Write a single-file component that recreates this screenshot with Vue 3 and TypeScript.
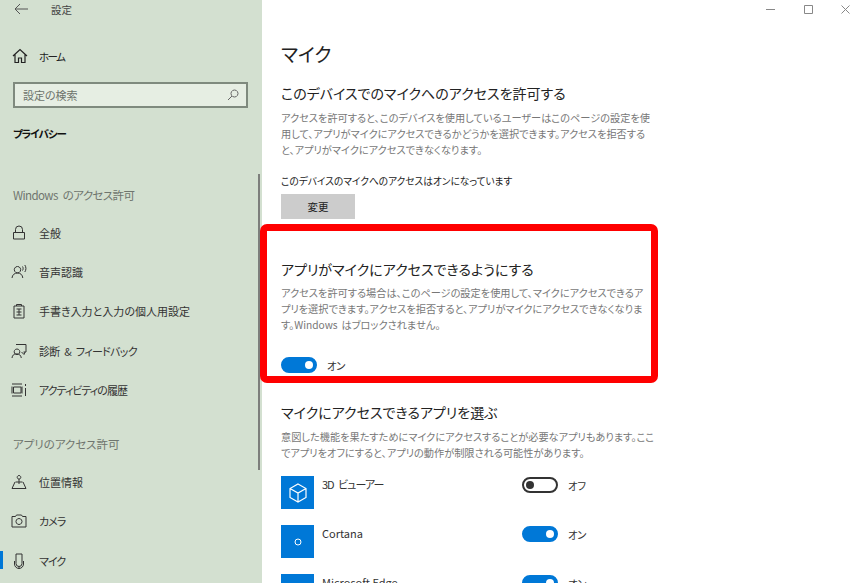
<script setup lang="ts">
interface NavItem { label: string; icon: string; active?: boolean; fit?: string }
const group1: NavItem[] = [
  { label: '全般', icon: 'lock' },
  { label: '音声認識', icon: 'speech' },
  { label: '手書き入力と入力の個人用設定', icon: 'clip' },
  { label: '診断 & フィードバック', icon: 'diag', fit: 'snug' },
  { label: 'アクティビティの履歴', icon: 'hist', fit: 'tight' },
]
const group2: NavItem[] = [
  { label: '位置情報', icon: 'loc' },
  { label: 'カメラ', icon: 'cam', fit: 'tight' },
  { label: 'マイク', icon: 'mic', active: true, fit: 'tight' },
]
const apps = [
  { name: '3D ビューアー', on: false, icon: 'cube', fit: 'tight' },
  { name: 'Cortana', on: true, icon: 'ring', fit: '' },
  { name: 'Microsoft Edge', on: true, icon: 'none', fit: '' },
]
const icons: Record<string, string> = {
  lock: 'M4.500 7.500V4.500a3.500 3.500 0 0 1 7 0v3M2.500 7.500h11v6.500h-11z',
  speech: 'M6.500 2.500a3.200 3.200 0 1 1-.01 0M1 14c.3-3.200 2.500-5 5.500-5s5 1.800 5.300 5M11.500 2.500c.8 1 .8 3 0 4M13.800 1c1.500 2 1.500 5 0 7',
  clip: 'M3 3h10v12H3zM5.500 3V1.500h5V3M5.500 6h5M5.500 9h5M5.500 12h5M8 6v6',
  diag: 'M5 1.500h10v7.500h-2.500M6 6a2.800 2.800 0 1 1-.01 0M1 15c.3-2.800 2-4.200 4.500-4.200S10 12.200 10.300 15M10.500 9l2.500 2.500 1-2.500',
  hist: 'M1 2h10M1 14h10M2.500 5h7.500v6H2.500zM1 4.500v7M11 4.500v7M14.500 2v2M14.500 6v8',
  loc: 'M8 1.500a1.800 1.800 0 1 1-.01 0M8 5v5M4.500 8h7M4 8l-3 6.500h14L12 8',
  cam: 'M1 3.500h3.500L5.500 2h5l1 1.500H15V14H1zM8 5.500a3 3 0 1 1-.01 0',
  mic: 'M5 1h6v9.500a3 3 0 0 1-6 0zM3.500 8v3a4.500 4.500 0 0 0 9 0V8M8 13v3',
}
</script>

<template>
  <div class="window">
    <aside class="sidebar">
      <div class="topbar">
        <svg class="back" width="14" height="12" viewBox="0 0 14 12"><path d="M6 1 1 6l5 5M1 6h13" fill="none" stroke="#555" /></svg>
        <span class="app-title">設定</span>
      </div>
      <div class="home">
        <svg width="16" height="16" viewBox="0 0 16 16"><path d="M1 8 8 1.500 15 8M3 6.500V14.500h3.500V10h3v4.500H13V6.500" fill="none" stroke="#222" stroke-width="1.200" /></svg>
        <span>ホーム</span>
      </div>
      <div class="search">
        <span>設定の検索</span>
        <svg width="12" height="12" viewBox="0 0 12 12"><path d="M7.500 1a3.500 3.500 0 1 1-.01 0M5 7 1 11" fill="none" stroke="#666" /></svg>
      </div>
      <div class="section-current">プライバシー</div>
      <div class="group-title first">Windows のアクセス許可</div>
      <div v-for="item in group1" :key="item.label" class="nav">
        <svg width="16" height="16" viewBox="0 0 16 16"><path :d="icons[item.icon]" fill="none" stroke="#333" /></svg>
        <span :class="item.fit">{{ item.label }}</span>
      </div>
      <div class="group-title second">アプリのアクセス許可</div>
      <div v-for="item in group2" :key="item.label" class="nav">
        <i v-if="item.active" class="active-bar"></i>
        <svg width="16" height="16" viewBox="0 0 16 16"><path :d="icons[item.icon]" fill="none" stroke="#333" /></svg>
        <span :class="item.fit">{{ item.label }}</span>
      </div>
      <i class="scrollbar"></i>
    </aside>
    <main class="content">
      <div class="winctl">
        <svg width="9" height="9" viewBox="0 0 9 9"><path d="M0 4.500h9" stroke="#888" /></svg>
        <svg width="9" height="9" viewBox="0 0 9 9"><path d="M.5.500h8v8h-8z" fill="none" stroke="#888" /></svg>
        <svg width="9" height="9" viewBox="0 0 9 9"><path d="m.5.500 8 8M8.500.500l-8 8" stroke="#888" /></svg>
      </div>
      <h1>マイク</h1>
      <h2 class="h-a">このデバイスでのマイクへのアクセスを許可する</h2>
      <p class="body">アクセスを許可すると、このデバイスを使用しているユーザーはこのページの設定を使<br />用して、アプリがマイクにアクセスできるかどうかを選択できます。アクセスを拒否する<br />と、アプリがマイクにアクセスできなくなります。</p>
      <p class="status">このデバイスのマイクへのアクセスはオンになっています</p>
      <button class="change">変更</button>
      <h2 class="h-b">アプリがマイクにアクセスできるようにする</h2>
      <p class="body b2">アクセスを許可する場合は、このページの設定を使用して、マイクにアクセスできるア<br />プリを選択できます。アクセスを拒否すると、アプリがマイクにアクセスできなくなりま<br />す。Windows はブロックされません。</p>
      <div class="toggle-row main-toggle"><span class="toggle on"></span><span class="tlabel">オン</span></div>
      <h2 class="h-c">マイクにアクセスできるアプリを選ぶ</h2>
      <p class="body">意図した機能を果たすためにマイクにアクセスすることが必要なアプリもあります。ここ<br />でアプリをオフにすると、アプリの動作が制限される可能性があります。</p>
      <div class="apps">
        <div v-for="app in apps" :key="app.name" class="app">
          <div class="tile">
            <svg v-if="app.icon === 'cube'" width="18" height="20" viewBox="0 0 18 20"><path d="M9 1 17 5.500v9L9 19l-8-4.500v-9zM1 5.500 9 10l8-4.500M9 10v9" fill="none" stroke="#fff" stroke-width="1.200" /></svg>
            <svg v-else-if="app.icon === 'ring'" width="8" height="8" viewBox="0 0 8 8"><circle cx="4" cy="4" r="3" fill="none" stroke="#fff" /></svg>
          </div>
          <span class="app-name"><span :class="app.fit">{{ app.name }}</span></span>
          <div class="toggle-row"><span class="toggle" :class="{ on: app.on }"></span><span class="tlabel">{{ app.on ? 'オン' : 'オフ' }}</span></div>
        </div>
      </div>
      <div class="highlight"></div>
    </main>
  </div>
</template>

<style>
html, body { margin: 0; overflow: hidden; }
</style>

<style scoped>
.window {
  width: 862px; height: 583px; display: flex; overflow: hidden; position: relative;
  font-family: "Noto Sans CJK JP", "Noto Sans", sans-serif; font-feature-settings: "palt"; color: #222; background: #fff;
}
.sidebar { width: 262px; flex: none; background: #d3e0d0; position: relative; padding-left: 13px; box-sizing: border-box; }
.topbar { height: 18px; display: flex; align-items: center; font-size: 10.500px; color: #444; }
.back { margin-left: 1px; }
.app-title { margin-left: 23px; }
.home { display: flex; align-items: center; height: 20px; margin-top: 28px; margin-left: -1px; font-size: 10.500px; letter-spacing: -1.500px; gap: 11px; }
.search {
  width: 235px; height: 26px; margin-top: 16px; box-sizing: border-box; border: 2px solid #7f8a7e; background: #e6eee3;
  display: flex; align-items: center; justify-content: space-between; padding: 0 7px 0 8px; font-size: 11px; color: #6d736c;
}
.section-current { margin-top: 17px; font-size: 10.500px; letter-spacing: -1px; font-weight: 700; color: #111; height: 17px; line-height: 17px; }
.group-title { font-size: 11.500px; color: #6f756e; height: 17px; line-height: 17px; }
.group-title.first { margin-top: 45px; margin-bottom: 9px; letter-spacing: -.6px; word-spacing: 3px; }
.group-title.second { margin-top: 27px; margin-bottom: 9px; }
.nav { height: 39.300px; display: flex; align-items: center; gap: 12px; font-size: 11px; position: relative; color: #333; }
.nav svg { margin-left: -2px; flex: none; }
.tight { letter-spacing: -1px; word-spacing: 3px; }
.snug { letter-spacing: -.7px; word-spacing: 3px; }
.active-bar { position: absolute; left: -13px; top: 10px; width: 3px; height: 18px; background: #0078d7; }
.scrollbar { position: absolute; right: 2px; top: 174px; width: 2px; height: 296px; background: #7d7f7c; }

.content { flex: 1; position: relative; padding-left: 19px; box-sizing: border-box; min-width: 0; }
.winctl { position: absolute; top: 5px; right: 12px; display: flex; gap: 28.500px; }
h1 { margin: 40px 0 0; font-size: 19px; font-weight: 400; line-height: 27px; color: #222; }
h2 { margin: 0; font-size: 14px; font-weight: 400; line-height: 22px; color: #222; }
.h-a { margin-top: 15px; }
.h-b { margin-top: 39px; }
.h-c { margin-top: 27px; }
.body { margin: 6px 0 0; font-size: 10.200px; line-height: 16px; color: #777; white-space: nowrap; word-spacing: 1.500px; }
.body.b2 { margin-top: 5px; }
.status { margin: 15px 0 0; font-size: 9.700px; line-height: 16px; color: #222; }
.change { display: block; margin-top: 5px; width: 74px; height: 25px; border: none; background: #ccc; font: inherit; font-size: 10.500px; color: #222; padding: 0; }
.toggle-row { display: flex; align-items: center; gap: 10px; }
.main-toggle { margin-top: 23px; height: 18px; }
.toggle { width: 36px; height: 16px; border-radius: 9px; box-sizing: border-box; border: 2px solid #333; position: relative; display: block; background: #fff; flex: none; }
.toggle::after { content: ""; position: absolute; width: 8px; height: 8px; border-radius: 50%; left: 2px; top: 2px; background: #333; }
.toggle.on { background: #0078d7; border-color: #0078d7; }
.toggle.on::after { left: auto; right: 2px; background: #fff; }
.tlabel { font-size: 10.500px; letter-spacing: -.5px; color: #333; }
.apps { margin-top: 15px; }
.app { display: flex; align-items: flex-start; height: 49px; position: relative; }
.tile { width: 33px; height: 33px; background: #0078d7; display: flex; align-items: center; justify-content: center; flex: none; }
.app-name { font-size: 11px; line-height: 16px; margin-left: 8px; width: 200px; color: #333; flex: none; }
.app .toggle-row { height: 16px; margin-top: 1px; }
.highlight { position: absolute; left: -2px; top: 224px; width: 398px; height: 159px; box-sizing: border-box; border: 7px solid #f00; border-radius: 7px; pointer-events: none; }
</style>
